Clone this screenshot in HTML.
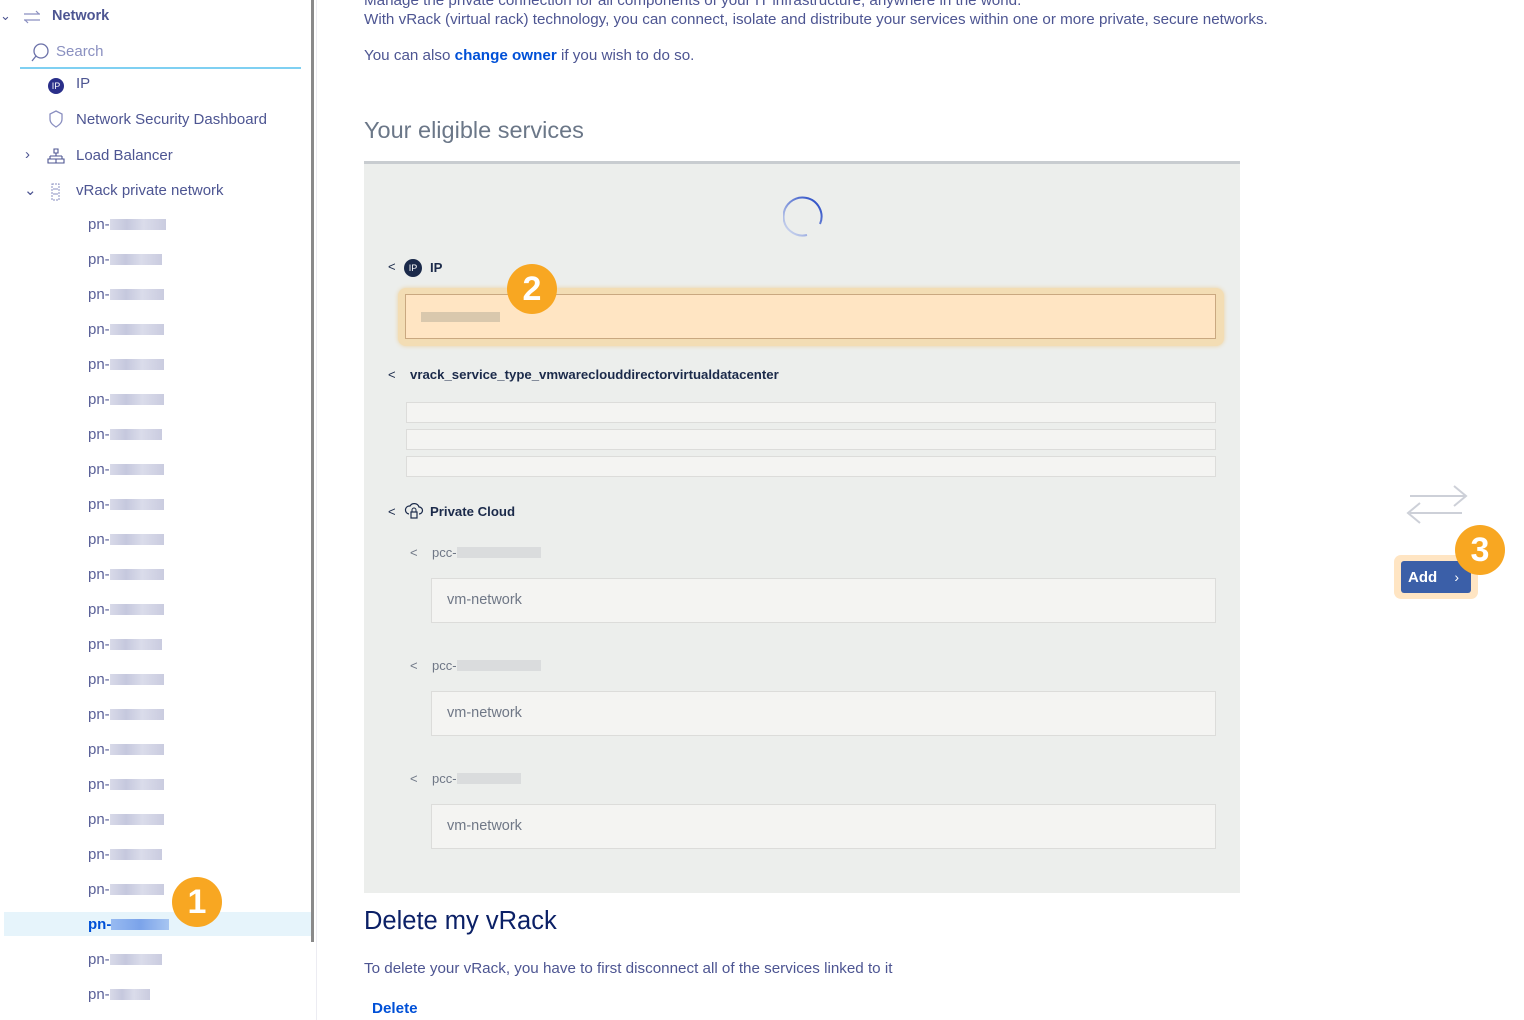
<!DOCTYPE html>
<html><head><meta charset="utf-8"><style>
*{margin:0;padding:0;box-sizing:border-box}
body{width:1524px;height:1020px;overflow:hidden;background:#fff;font-family:"Liberation Sans",sans-serif;color:#4d5592;position:relative}
.a{position:absolute;white-space:nowrap}
.side{font-size:15px;color:#4d5592}
.blur{display:inline-block;height:11px;vertical-align:-1px;background:linear-gradient(90deg,#d4d6e6,#bfc2da 30%,#d6d8e8 60%,#c4c6dc);opacity:.9}
.pn{left:88px;font-size:15px;color:#5a6098}
.panel{left:364px;top:161px;width:876px;height:732px;background:#eceeec;border-top:3px solid #c8ccd0}
.box{background:#f4f4f2;border:1px solid #dcdcda}
.badge{position:absolute;width:50px;height:50px;border-radius:50%;background:#f8a722;color:#fff;font-weight:bold;font-size:34px;text-align:center;line-height:50px}
.t{font-size:13.2px;color:#1b2a4a;font-weight:bold}
.lt{color:#6f7786;font-size:13px}
.mt{font-size:15.2px}
</style></head><body>
<!-- sidebar -->
<div class="a" style="left:0;top:8px;font-size:13px;color:#4d5592">⌄</div>
<svg class="a" style="left:22px;top:10px" width="20" height="14"><path d="M2 4h16M14 1l3 3M18 10H2M6 13l-3-3" stroke="#8a8fc0" stroke-width="1.2" fill="none"/></svg>
<div class="a" style="left:52px;top:8px;font-size:14.5px;font-weight:bold;color:#4d5592">Network</div>
<svg class="a" style="left:30px;top:43px" width="20" height="20"><circle cx="11" cy="8" r="7" stroke="#6a70a8" fill="none" stroke-width="1.3"/><path d="M6 13l-4 5" stroke="#6a70a8" stroke-width="1.3"/></svg>
<div class="a" style="left:56px;top:43px;font-size:15px;color:#8a90c0">Search</div>
<div class="a" style="left:20px;top:67px;width:281px;height:2px;background:#7fd0f2"></div>
<div class="a" style="left:48px;top:78px;width:16px;height:16px;border-radius:50%;background:#2a2f8a;color:#fff;font-size:9px;text-align:center;line-height:16px">IP</div>
<div class="a side" style="left:76px;top:75px">IP</div>
<svg class="a" style="left:48px;top:110px" width="16" height="18"><path d="M8 1l6 3v5c0 4-3 6-6 8-3-2-6-4-6-8V4z" stroke="#8a8fc0" fill="none" stroke-width="1.3"/></svg>
<div class="a side" style="left:76px;top:111px">Network Security Dashboard</div>
<div class="a side" style="left:25px;top:146px">›</div>
<svg class="a" style="left:47px;top:148px" width="18" height="16"><path d="M7 1h4v4H7zM9 5v3M3 8h12M3 8v3M15 8v3M1 11h16v4H1zM9 11v4" stroke="#4d5592" fill="none" stroke-width="1.1"/></svg>
<div class="a side" style="left:76px;top:147px">Load Balancer</div>
<div class="a side" style="left:24px;top:181px">⌄</div>
<svg class="a" style="left:51px;top:183px" width="10" height="18"><rect x="1" y="1" width="7" height="16" stroke="#8a8fc0" fill="none" stroke-dasharray="2 1"/><path d="M2 6h5M2 11h5" stroke="#8a8fc0"/></svg>
<div class="a side" style="left:76px;top:182px">vRack private network</div>
<div class="a" style="left:4px;top:912px;width:308px;height:24px;background:#e6f4fb"></div>
<div id="pns"></div>
<div class="a" style="left:311px;top:0;width:3px;height:942px;background:#8a8a8a"></div>
<div class="a" style="left:316px;top:0;width:1px;height:1020px;background:#ececf2"></div>
<div class="badge" style="left:172px;top:877px">1</div>
<!-- main -->
<div class="a mt" style="left:364px;top:-8px">Manage the private connection for all components of your IT infrastructure, anywhere in the world.</div>
<div class="a mt" style="left:364px;top:11px">With vRack (virtual rack) technology, you can connect, isolate and distribute your services within one or more private, secure networks.</div>
<div class="a mt" style="left:364px;top:47px">You can also <b style="color:#0050d7">change owner</b> if you wish to do so.</div>
<div class="a" style="left:364px;top:117px;font-size:23.5px;color:#6b7788;font-weight:300">Your eligible services</div>
<div class="a panel"></div>
<svg class="a" style="left:783px;top:196px" width="44" height="44"><defs><linearGradient id="g" x1="0" y1="1" x2="1" y2="0"><stop offset="0" stop-color="#dde4f2"/><stop offset="1" stop-color="#1a3fc2"/></linearGradient></defs><path d="M37 29A19 19 0 1 0 24 40" stroke="url(#g)" stroke-width="2" fill="none" transform="translate(0,-1)"/></svg>
<div class="a lt" style="left:388px;top:259px;color:#1b2a4a">&lt;</div>
<div class="a" style="left:404px;top:259px;width:18px;height:18px;border-radius:50%;background:#1b2a4a;color:#fff;font-size:9px;text-align:center;line-height:18px">IP</div>
<div class="a t" style="left:430px;top:260px">IP</div>
<div class="a" style="left:398px;top:288px;width:826px;height:58px;border-radius:8px;background:#f3ddb4;box-shadow:0 0 4px #ecd2a0"></div>
<div class="a" style="left:405px;top:294px;width:811px;height:45px;background:#ffe5c3;border:1px solid #c9a880"></div>
<div class="a" style="left:421px;top:312px;width:79px;height:10px;background:#d0c0a8;opacity:.8"></div>
<div class="badge" style="left:507px;top:264px">2</div>
<div class="a lt" style="left:388px;top:367px;color:#1b2a4a">&lt;</div>
<div class="a t" style="left:410px;top:367px">vrack_service_type_vmwareclouddirectorvirtualdatacenter</div>
<div class="a box" style="left:406px;top:402px;width:810px;height:21px"></div>
<div class="a box" style="left:406px;top:429px;width:810px;height:21px"></div>
<div class="a box" style="left:406px;top:456px;width:810px;height:21px"></div>
<div class="a lt" style="left:388px;top:504px;color:#1b2a4a">&lt;</div>
<svg class="a" style="left:404px;top:502px" width="20" height="19"><path d="M5 12a4 4 0 0 1 1-8 5 5 0 0 1 9 1 3.5 3.5 0 0 1 0 7" stroke="#1b2a4a" fill="none" stroke-width="1.2"/><rect x="7" y="10" width="6" height="6" stroke="#1b2a4a" fill="none" stroke-width="1.2"/><path d="M8 10V8a2 2 0 0 1 4 0v2" stroke="#1b2a4a" fill="none"/></svg>
<div class="a t" style="left:430px;top:504px">Private Cloud</div>
<div id="pcc"></div>
<div class="a" style="left:364px;top:907px;font-size:25.5px;color:#0b2066">Delete my vRack</div>
<div class="a mt" style="left:364px;top:960px">To delete your vRack, you have to first disconnect all of the services linked to it</div>
<div class="a mt" style="left:372px;top:1000px;font-weight:bold;color:#0050d7">Delete</div>
<!-- add -->
<svg class="a" style="left:1404px;top:484px" width="64" height="48"><path d="M6 12h56M50 2l12 10-12 10M58 29H6M16 19L4 29l12 10" stroke="#cdd0d8" stroke-width="2" fill="none"/></svg>
<div class="a" style="left:1394px;top:555px;width:84px;height:44px;border-radius:7px;background:#ffe5c3"></div>
<div class="a" style="left:1401px;top:561px;width:70px;height:32px;border-radius:3px;background:#3b5fa8;color:#fff;font-weight:bold;font-size:15px;line-height:32px;padding-left:7px">Add <span style="font-weight:normal;margin-left:13px;font-size:14px">›</span></div>
<div class="badge" style="left:1455px;top:525px">3</div>
<script>
var s='',ys=[225,260,295,330,365,400,435,470,505,540,575,610,645,680,715,750,785,820,855,890,925,960,995],w=[56,52,54,54,54,54,52,54,54,54,54,54,52,54,54,54,54,54,52,54,58,52,40];
ys.forEach(function(y,i){var sel=y==925;s+='<div class="a pn" style="top:'+(y-9)+'px;'+(sel?'color:#0050d7;font-weight:bold':'')+'">pn-<span class="blur" style="width:'+w[i]+'px;'+(sel?'background:linear-gradient(90deg,#8fb4f0,#6f9ae8,#a0c0f0)':'')+'"></span></div>'});
document.getElementById('pns').outerHTML=s;
var p='';[[545,601,84],[658,714,84],[771,827,64]].forEach(function(r){p+='<div class="a lt" style="left:410px;top:'+r[0]+'px">&lt;</div><div class="a lt" style="left:432px;top:'+r[0]+'px">pcc-<span class="blur" style="width:'+r[2]+'px;background:#d8d9dc"></span></div><div class="a box" style="left:431px;top:'+(r[1]-23)+'px;width:785px;height:45px"></div><div class="a lt" style="left:447px;top:'+(r[1]-9)+'px;font-size:14.5px">vm-network</div>'});
document.getElementById('pcc').outerHTML=p;
</script>
</body></html>
